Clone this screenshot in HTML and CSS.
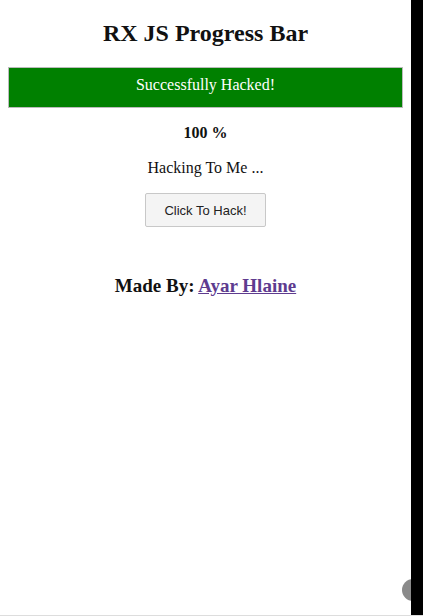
FILE: index.html
```html
<!DOCTYPE html>
<html>
<head>
<meta charset="utf-8">
<link rel="stylesheet" href="styles.css">
</head>
<body>
<div class="frame">
  <div class="page">
    <h2 class="title">RX JS Progress Bar</h2>
    <div class="bar">Successfully Hacked!</div>
    <p class="percent">100 %</p>
    <p class="status">Hacking To Me ...</p>
    <button class="btn">Click To Hack!</button>
    <h3 class="credit">Made By: <a class="link" href="#">Ayar Hlaine</a></h3>
  </div>
  <div class="dot"></div>
  <div class="strip"></div>
</div>
</body>
</html>
```
FILE: styles.css
```css
html, body {
  margin: 0;
  padding: 0;
  height: 100%;
  background: #fff;
}
.frame {
  position: relative;
  display: flex;
  height: 616px;
  width: 423px;
  overflow: hidden;
  border-bottom: 1px solid #ddd;
  box-sizing: border-box;
}
.page {
  width: 411px;
  padding: 19px 8px 0;
  box-sizing: border-box;
  font-family: "Liberation Serif", "Times New Roman", serif;
  color: #111;
  text-align: center;
  display: flex;
  flex-direction: column;
  align-items: center;
}
.strip {
  position: relative;
  z-index: 2;
  width: 12px;
  background: #000;
  flex: none;
}
.dot {
  position: absolute;
  z-index: 1;
  left: 402px;
  top: 579px;
  width: 22px;
  height: 22px;
  border-radius: 50%;
  background: #8a8a8a;
}
.title {
  font-size: 24px;
  font-weight: bold;
  margin: 0;
  line-height: 28px;
}
.bar {
  align-self: stretch;
  margin-top: 20px;
  height: 41px;
  line-height: 33px;
  box-sizing: border-box;
  background: #008000;
  border: 1px solid #bbb;
  color: #fff;
  font-size: 16px;
}
.percent {
  font-weight: bold;
  font-size: 16px;
  margin: 16px 0 0;
  line-height: 18px;
}
.status {
  font-size: 16px;
  margin: 17px 0 0;
  line-height: 18px;
}
.btn {
  margin-top: 16px;
  width: 121px;
  height: 34px;
  font-family: "Liberation Sans", Arial, sans-serif;
  font-size: 13px;
  color: #222;
  background: #f4f4f4;
  border: 1px solid #c8c8c8;
  border-radius: 2px;
}
.credit {
  font-size: 19px;
  font-weight: bold;
  margin: 48px 0 0;
  line-height: 22px;
}
.link {
  color: #5e3b8f;
}
```
